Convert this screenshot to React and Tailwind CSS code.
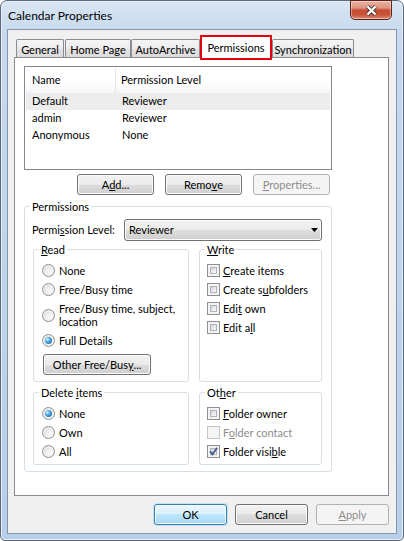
import React from 'react';

const btnBase = 'h-[21px] shrink-0 rounded-[3px] border flex items-center justify-center leading-[15px]';
const btnNormal = 'border-[#707070] bg-[linear-gradient(to_bottom,#f2f2f2_0%,#ebebeb_50%,#dddddd_50%,#cfcfcf_100%)] shadow-[inset_0_0_0_1px_#fcfcfc] text-black';
const btnPrimary = 'border-[#3c7fb1] bg-[linear-gradient(to_bottom,#eaf6fd_0%,#d9f0fc_50%,#bee6fd_50%,#a7d9f5_100%)] shadow-[inset_0_0_0_1px_#f4fbff,0_0_0_1px_#bde3f7] text-black';
const btnDisabled = 'border-[#adb2b5] bg-[#f4f4f4] text-[#8d8d8d]';

const WinButton = ({ children, className = 'w-[77px]', disabled, primary }) => {
  const look = disabled ? btnDisabled : primary ? btnPrimary : btnNormal;
  return <div className={`${btnBase} ${look} ${className}`}>{children}</div>;
};

const Radio = ({ checked }) => (
  <span className="w-[13px] h-[13px] shrink-0 rounded-full border border-[#8e8f8f] bg-[radial-gradient(circle_at_65%_65%,#fbfbfb_0%,#e8e8e8_55%,#c8cacd_100%)] shadow-[inset_0_0_0_1px_#f3f3f3] flex items-center justify-center">
    {checked && (
      <span className="w-[7px] h-[7px] rounded-full bg-[radial-gradient(circle_at_35%_35%,#d8f2ff_0%,#4aa8e6_40%,#15508f_100%)]" />
    )}
  </span>
);

const Check = ({ checked, disabled }) => {
  if (disabled) {
    return <span className="w-[13px] h-[13px] shrink-0 border border-[#c4c4c4] bg-[#f4f4f4]" />;
  }
  return (
    <span className="relative w-[13px] h-[13px] shrink-0 border border-[#8e8f8f] bg-[#f4f4f4] p-[2px] flex">
      <span className="flex-1 border border-[#b0b4ba] bg-[linear-gradient(135deg,#cdd1d6_0%,#e9ebee_55%,#f8f8f8_100%)]" />
      {checked && (
        <svg className="absolute left-0 top-0" width="11" height="11" viewBox="0 0 11 11">
          <path d="M2 5.3 L4.4 8.4 L9.2 1.8" fill="none" stroke="#4a5e91" strokeWidth="1.9" />
        </svg>
      )}
    </span>
  );
};

const RadioRow = ({ checked, children }) => (
  <div className="flex items-center gap-[4px] whitespace-nowrap">
    <Radio checked={checked} />
    <span>{children}</span>
  </div>
);

const CheckRow = ({ checked, disabled, children }) => (
  <div className={`flex items-center gap-[3px] whitespace-nowrap ${disabled ? 'text-[#8d8d8d]' : ''}`}>
    <Check checked={checked} disabled={disabled} />
    <span>{children}</span>
  </div>
);

const Group = ({ label, className, children }) => (
  <fieldset className={`min-w-0 border border-[#d5dfe5] rounded-[3px] ${className}`}>
    <legend className="ml-[5px] px-[2px] leading-[15px]">{label}</legend>
    {children}
  </fieldset>
);

const tabIdle = 'h-[18px] border border-b-0 border-[#898c95] rounded-t-[2px] bg-[linear-gradient(to_bottom,#f5f5f5_0%,#ececec_50%,#e3e3e3_50%,#dcdcdc_100%)] pt-[2px] text-center leading-[15px] whitespace-nowrap';

const users = [
  { name: 'Default', level: 'Reviewer', selected: true },
  { name: 'admin', level: 'Reviewer' },
  { name: 'Anonymous', level: 'None' },
];

export default function App() {
  return (
    <div className="w-[404px] h-[541px] bg-white font-['Lato',sans-serif] text-[11px] text-black">
      <div className="h-full flex flex-col rounded-t-[7px] rounded-b-[5px] border border-[#5d6a7a] bg-[linear-gradient(to_bottom,#d9e6f5_0%,#c6d9ee_6%,#bed3eb_60%,#b8cfe9_100%)] shadow-[inset_0_0_0_1px_#e4edf8]">
        {/* title bar */}
        <div className="h-[28px] shrink-0 flex justify-between">
          <span className="pl-[7px] pt-[7px] leading-[15px] text-[12px]">Calendar Properties</span>
          <div className="-mt-px mr-[11px] w-[42px] h-[20px] rounded-b-[5px] border border-[#5a2219] bg-[linear-gradient(to_bottom,#eab2a4_0%,#dd9580_38%,#c64a31_52%,#c9563c_78%,#e2917a_100%)] shadow-[inset_0_0_0_1px_rgba(255,255,255,0.4)] flex items-center justify-center">
            <svg width="13" height="11" viewBox="0 0 13 11">
              <path d="M2.5 1.5 L10.5 9.5 M10.5 1.5 L2.5 9.5" stroke="#4b3b39" strokeWidth="4" />
              <path d="M2.5 1.5 L10.5 9.5 M10.5 1.5 L2.5 9.5" stroke="#ffffff" strokeWidth="2.2" />
            </svg>
          </div>
        </div>

        {/* client area */}
        <div className="flex-1 mx-[6px] mb-[6px] border border-[#8396ae] bg-[#f0f0f0] flex flex-col">
          <div className="mt-[5px] ml-[8px] flex items-end">
            <div className={`${tabIdle} w-[48px] mr-px`}>General</div>
            <div className={`${tabIdle} w-[66px]`}>Home Page</div>
            <div className={`${tabIdle} w-[69px]`}>AutoArchive</div>
            <div className="relative z-10 w-[72px] h-[25px] -mb-[3px] border-2 border-[#e3000f] bg-white pt-[3px] text-center leading-[15px]">
              Permissions
            </div>
            <div className={`${tabIdle} w-[82px]`}>Synchronization</div>
          </div>

          <div className="ml-[6px] w-[375px] h-[439px] border border-[#898c95] bg-white flex flex-col">
            {/* list */}
            <div className="ml-[9px] mt-[8px] w-[308px] h-[104px] border border-[#828790] bg-white p-px">
              <div className="flex h-[25px] bg-[linear-gradient(to_bottom,#ffffff_0%,#ffffff_55%,#f3f4f6_100%)]">
                <div className="w-[90px] pl-[6px] flex items-center border-r border-[#e3e6ea]">Name</div>
                <div className="pl-[5px] flex items-center">Permission Level</div>
              </div>
              {users.map((u) => (
                <div key={u.name} className={`flex h-[17px] items-center ${u.selected ? 'bg-[#ececec]' : ''}`}>
                  <div className="w-[90px] pl-[6px]">{u.name}</div>
                  <div className="pl-[6px]">{u.level}</div>
                </div>
              ))}
            </div>

            <div className="ml-[9px] mt-[4px] w-[308px] pr-[2px] flex justify-end gap-[11px]">
              <WinButton>A<u>d</u>d...</WinButton>
              <WinButton>Remo<u>v</u>e</WinButton>
              <WinButton disabled><u>P</u>roperties...</WinButton>
            </div>

            {/* permissions */}
            <Group label="Permissions" className="ml-[9px] mt-[4px] w-[308px] pb-[6px]">
              <div className="flex items-center pt-[5px] pl-[7px]">
                <span className="w-[92px] whitespace-nowrap">Permi<u>s</u>sion Level:</span>
                <div className="w-[198px] h-[22px] rounded-[3px] border border-[#707070] bg-[linear-gradient(to_bottom,#f2f2f2_0%,#ebebeb_50%,#dddddd_50%,#cfcfcf_100%)] shadow-[inset_0_0_0_1px_#fcfcfc] flex items-center justify-between pl-[4px] pr-[3px]">
                  <span>Reviewer</span>
                  <svg width="7" height="4" viewBox="0 0 7 4">
                    <polygon points="0,0 7,0 3.5,4" fill="#000" />
                  </svg>
                </div>
              </div>

              <div className="mt-[1px] pl-[8px] flex gap-[10px]">
                <Group label={<><u>R</u>ead</>} className="w-[156px] h-[140px]">
                  <div className="pl-[8px] pt-[7px] flex flex-col gap-[6px] leading-[13px]">
                    <RadioRow>None</RadioRow>
                    <RadioRow>Free/Busy time</RadioRow>
                    <RadioRow>
                      Free/Busy time, subject,
                      <br />
                      location
                    </RadioRow>
                    <RadioRow checked>Full Details</RadioRow>
                  </div>
                  <div className="ml-[9px] mt-[7px]">
                    <WinButton className="w-[108px]">Other Free/Bus<u>y</u>...</WinButton>
                  </div>
                </Group>
                <Group label={<><u>W</u>rite</>} className="w-[123px] h-[140px]">
                  <div className="pl-[7px] pt-[7px] flex flex-col gap-[6px] leading-[13px]">
                    <CheckRow><u>C</u>reate items</CheckRow>
                    <CheckRow>Create s<u>u</u>bfolders</CheckRow>
                    <CheckRow>Edi<u>t</u> own</CheckRow>
                    <CheckRow>Edit a<u>l</u>l</CheckRow>
                  </div>
                </Group>
              </div>

              <div className="mt-[3px] pl-[8px] flex gap-[10px]">
                <Group label={<>Delete <u>i</u>tems</>} className="w-[156px] h-[80px]">
                  <div className="pl-[8px] pt-[7px] flex flex-col gap-[6px] leading-[13px]">
                    <RadioRow checked>None</RadioRow>
                    <RadioRow>Own</RadioRow>
                    <RadioRow>All</RadioRow>
                  </div>
                </Group>
                <Group label={<>Ot<u>h</u>er</>} className="w-[123px] h-[80px]">
                  <div className="pl-[7px] pt-[7px] flex flex-col gap-[6px] leading-[13px]">
                    <CheckRow><u>F</u>older owner</CheckRow>
                    <CheckRow disabled>F<u>o</u>lder contact</CheckRow>
                    <CheckRow checked>Folder visi<u>b</u>le</CheckRow>
                  </div>
                </Group>
              </div>
            </Group>
          </div>

          <div className="ml-[6px] mt-[8px] w-[375px] flex justify-end gap-[8px]">
            <WinButton primary className="w-[73px]">OK</WinButton>
            <WinButton className="w-[73px]">Cancel</WinButton>
            <WinButton disabled className="w-[73px]"><u>A</u>pply</WinButton>
          </div>
        </div>
      </div>
    </div>
  );
}
